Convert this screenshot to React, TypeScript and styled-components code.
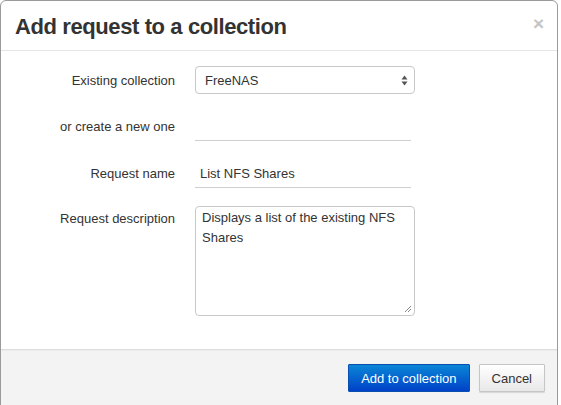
import React from "react";
import styled, { createGlobalStyle } from "styled-components";

const Global = createGlobalStyle`
  html, body { margin: 0; padding: 0; background: #ffffff; }
  body { font-family: "Liberation Sans", Arial, sans-serif; color: #333; overflow: hidden; }
`;

const Modal = styled.div`
  width: 556px;
  margin: 0;
  border: 1px solid #9a9a9a;
  border-radius: 6px;
  background: #fff;
  overflow: hidden;
  height: 420px;
  display: flex;
  flex-direction: column;
`;

const Header = styled.div`
  display: flex;
  align-items: center;
  justify-content: space-between;
  height: 49px;
  padding: 0 15px 0 14px;
  border-bottom: 1px solid #e5e5e5;
`;

const Title = styled.h3`
  margin: 0;
  margin-top: 2px;
  font-size: 22px;
  letter-spacing: -0.4px;
  font-weight: bold;
  color: #333;
  line-height: 30px;
`;

const Close = styled.span`
  font-size: 19px;
  font-weight: bold;
  color: #c4c4c4;
  line-height: 20px;
  margin-top: -4px;
  margin-right: -2px;
`;

const Body = styled.div`
  padding: 15px 15px 0 14px;
  height: 298px;
  box-sizing: border-box;
`;

const Group = styled.div<{ $top?: boolean }>`
  display: grid;
  grid-template-columns: 160px 220px;
  column-gap: 20px;
  align-items: ${(p) => (p.$top ? "start" : "center")};
  margin-bottom: 18px;
`;

const Label = styled.label<{ $top?: boolean }>`
  text-align: right;
  font-size: 13px;
  color: #333;
  padding-top: ${(p) => (p.$top ? "5px" : "0")};
`;

const Select = styled.div`
  box-sizing: border-box;
  height: 28px;
  border: 1px solid #c8c8c8;
  border-radius: 4px;
  display: flex;
  align-items: center;
  justify-content: space-between;
  padding: 0 6px 0 9px;
  font-size: 13px;
  color: #333;
`;

const Line = styled.div`
  box-sizing: border-box;
  width: 216px;
  height: 29px;
  border-bottom: 1px solid #cfcfcf;
  display: flex;
  align-items: center;
  padding-left: 5px;
  font-size: 13px;
  color: #333;
`;

const Area = styled.div`
  position: relative;
  box-sizing: border-box;
  height: 110px;
  border: 1px solid #c8c8c8;
  border-radius: 4px;
  padding: 1px 6px;
  font-size: 13px;
  line-height: 20px;
  color: #333;
`;

const Grip = styled.svg`
  position: absolute;
  right: 2px;
  bottom: 2px;
`;

const Footer = styled.div`
  flex: 1;
  background: #f3f3f3;
  border-top: 1px solid #dcdcdc;
  box-shadow: inset 0 1px 0 #ececec;
  display: flex;
  justify-content: flex-end;
  align-items: flex-start;
  gap: 9px;
  padding: 14px 12px 0 0;
`;

const Button = styled.button<{ $primary?: boolean }>`
  box-sizing: border-box;
  height: 28px;
  padding: 0 12px;
  font-family: "Liberation Sans", Arial, sans-serif;
  font-size: 13px;
  border-radius: 1px;
  border: 1px solid ${(p) => (p.$primary ? "#0a4fb0" : "#c6c6c6")};
  color: ${(p) => (p.$primary ? "#fff" : "#333")};
  background: ${(p) =>
    p.$primary
      ? "linear-gradient(#0a86d6, #0042c8)"
      : "linear-gradient(#ffffff, #e8e8e8)"};
  box-shadow: ${(p) => (p.$primary ? "none" : "0 1px 1px rgba(0,0,0,0.12)")};
`;

export default function App() {
  return (
    <>
      <Global />
      <Modal>
        <Header>
          <Title>Add request to a collection</Title>
          <Close>×</Close>
        </Header>
        <Body>
          <Group>
            <Label>Existing collection</Label>
            <Select>
              <span>FreeNAS</span>
              <svg width="7" height="11" viewBox="0 0 7 11">
                <path d="M3.5 0.5 L6.5 4.5 L0.5 4.5 Z" fill="#555" />
                <path d="M3.5 10.5 L6.5 6.5 L0.5 6.5 Z" fill="#555" />
              </svg>
            </Select>
          </Group>
          <Group>
            <Label>or create a new one</Label>
            <Line />
          </Group>
          <Group>
            <Label>Request name</Label>
            <Line>List NFS Shares</Line>
          </Group>
          <Group $top>
            <Label $top>Request description</Label>
            <Area>
              Displays a list of the existing NFS Shares
              <Grip width="8" height="8" viewBox="0 0 8 8">
                <path d="M1 7 L7 1 M4 7 L7 4" stroke="#888" strokeWidth="1" />
              </Grip>
            </Area>
          </Group>
        </Body>
        <Footer>
          <Button $primary>Add to collection</Button>
          <Button>Cancel</Button>
        </Footer>
      </Modal>
    </>
  );
}
